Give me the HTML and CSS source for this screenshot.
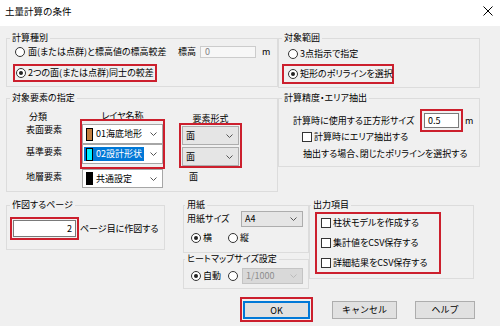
FILE: index.html
```html
<!DOCTYPE html>
<html lang="ja">
<head>
    <meta charset="UTF-8">
    <meta name="viewport" content="width=device-width, initial-scale=1.0">
    <title>土量計算の条件</title>
    <link rel="stylesheet" href="styles.css">
</head>
<body>
<div class="dialog">
    <div class="titlebar">
        <span class="title">土量計算の条件</span>
        <svg class="close" width="10" height="10" viewBox="0 0 10 10"><path d="M0.5 0.5 L9.5 9.5 M9.5 0.5 L0.5 9.5" stroke="#000" stroke-width="1" fill="none"/></svg>
    </div>

    <div class="content">
        <!-- 上段 -->
        <div class="row row-a">
            <fieldset class="group g-kind">
                <legend>計算種別</legend>
                <div class="opt opt-elev">
                    <span class="radio"></span>
                    <span class="elev-text">面(または点群)と標高値の標高較差</span>
                    <span class="elev-label">標高</span>
                    <span class="textbox disabled elev-box">0</span>
                    <span class="unit">m</span>
                </div>
                <div class="mark mark-kind">
                    <span class="radio on"></span><span class="opt-label">2つの面(または点群)同士の較差</span>
                </div>
            </fieldset>

            <fieldset class="group g-range">
                <legend>対象範囲</legend>
                <div class="opt opt-range">
                    <span class="radio"></span><span class="opt-label">3点指示で指定</span>
                </div>
                <div class="mark mark-range">
                    <span class="radio on"></span><span class="opt-label">矩形のポリラインを選択</span>
                </div>
            </fieldset>
        </div>

        <!-- 中段 -->
        <div class="row row-b">
            <fieldset class="group g-target">
                <legend>対象要素の指定</legend>
                <div class="cols">
                    <div class="col-kind">
                        <div class="hd-kind">分類</div>
                        <div class="kind-label k1">表面要素</div>
                        <div class="kind-label k2">基準要素</div>
                        <div class="kind-label k3">地層要素</div>
                    </div>
                    <div class="col-layer">
                        <div class="hd-layer">レイヤ名称</div>
                        <div class="mark mark-layer">
                            <div class="combo">
                                <span class="swatch brown"></span><span class="combo-text">01海底地形</span>
                                <svg class="chev" width="7" height="4" viewBox="0 0 7 4"><polyline points="0.5,0.5 3.5,3.5 6.5,0.5" fill="none" stroke="#555" stroke-width="1"/></svg>
                            </div>
                            <div class="combo">
                                <span class="sel"><span class="swatch cyan"></span><span class="combo-text">02設計形状</span></span>
                                <svg class="chev" width="7" height="4" viewBox="0 0 7 4"><polyline points="0.5,0.5 3.5,3.5 6.5,0.5" fill="none" stroke="#555" stroke-width="1"/></svg>
                            </div>
                        </div>
                        <div class="combo combo-3">
                            <span class="swatch black"></span><span class="combo-text">共通設定</span>
                            <svg class="chev" width="7" height="4" viewBox="0 0 7 4"><polyline points="0.5,0.5 3.5,3.5 6.5,0.5" fill="none" stroke="#555" stroke-width="1"/></svg>
                        </div>
                    </div>
                    <div class="col-type">
                        <div class="hd-type">要素形式</div>
                        <div class="mark mark-type">
                            <div class="combo gray">
                                <span class="combo-text">面</span>
                                <svg class="chev" width="7" height="4" viewBox="0 0 7 4"><polyline points="0.5,0.5 3.5,3.5 6.5,0.5" fill="none" stroke="#555" stroke-width="1"/></svg>
                            </div>
                            <div class="combo gray">
                                <span class="combo-text">面</span>
                                <svg class="chev" width="7" height="4" viewBox="0 0 7 4"><polyline points="0.5,0.5 3.5,3.5 6.5,0.5" fill="none" stroke="#555" stroke-width="1"/></svg>
                            </div>
                        </div>
                        <div class="type-fixed">面</div>
                    </div>
                </div>
            </fieldset>

            <fieldset class="group g-accuracy">
                <legend>計算精度・エリア抽出</legend>
                <div class="acc-size">
                    <span class="acc-label">計算時に使用する正方形サイズ</span>
                    <div class="mark mark-size"><span class="textbox size-box">0.5</span></div>
                    <span class="unit-m">m</span>
                </div>
                <div class="acc-check">
                    <span class="check"></span><span class="opt-label">計算時にエリア抽出する</span>
                </div>
                <div class="acc-note">抽出する場合、閉じたポリラインを選択する</div>
            </fieldset>
        </div>

        <!-- 下段 -->
        <div class="row row-c">
            <fieldset class="group g-page">
                <legend>作図するページ</legend>
                <div class="page-row">
                    <div class="mark mark-page"><span class="textbox num">2</span></div>
                    <span class="page-text">ページ目に作図する</span>
                </div>
            </fieldset>

            <div class="paper-col">
                <fieldset class="group g-paper">
                    <legend>用紙</legend>
                    <div class="paper-size">
                        <span class="paper-label">用紙サイズ</span>
                        <div class="combo gray paper-combo">
                            <span class="combo-text">A4</span>
                            <svg class="chev" width="7" height="4" viewBox="0 0 7 4"><polyline points="0.5,0.5 3.5,3.5 6.5,0.5" fill="none" stroke="#555" stroke-width="1"/></svg>
                        </div>
                    </div>
                    <div class="orient">
                        <span class="radio on"></span><span class="opt-label">横</span>
                        <span class="radio second"></span><span class="opt-label">縦</span>
                    </div>
                </fieldset>

                <fieldset class="group g-heat">
                    <legend>ヒートマップサイズ設定</legend>
                    <div class="heat-row">
                        <span class="radio on"></span><span class="opt-label">自動</span>
                        <span class="radio heat-second"></span>
                        <div class="combo disabled heat-combo">
                            <span class="combo-text">1/1000</span>
                            <svg class="chev" width="7" height="4" viewBox="0 0 7 4"><polyline points="0.5,0.5 3.5,3.5 6.5,0.5" fill="none" stroke="#bbb" stroke-width="1"/></svg>
                        </div>
                    </div>
                </fieldset>
            </div>

            <fieldset class="group g-output">
                <legend>出力項目</legend>
                <div class="mark mark-output">
                    <div class="chk-row"><span class="check"></span><span class="opt-label">柱状モデルを作成する</span></div>
                    <div class="chk-row"><span class="check"></span><span class="opt-label">集計値をCSV保存する</span></div>
                    <div class="chk-row"><span class="check"></span><span class="opt-label">詳細結果をCSV保存する</span></div>
                </div>
            </fieldset>
        </div>

        <!-- ボタン -->
        <div class="buttons">
            <div class="mark mark-ok"><button class="btn btn-ok">OK</button></div>
            <button class="btn btn-cancel">キャンセル</button>
            <button class="btn btn-help">ヘルプ</button>
        </div>
    </div>
</div>
</body>
</html>
```

FILE: styles.css
```css
* {
    box-sizing: border-box;
}

body {
    margin: 0;
    background-color: #f0f0f0;
    font-family: "Noto Sans CJK JP", "Noto Sans", sans-serif;
    font-size: 9px;
    line-height: 12px;
    color: #000;
    font-feature-settings: "palt";
}

.dialog {
    width: 500px;
    height: 326px;
    overflow: hidden;
}

.titlebar {
    height: 26px;
    background-color: #fff;
    display: flex;
    align-items: center;
    justify-content: space-between;
    padding: 0 7px 4px 5px;
}

.title {
    font-size: 9.5px;
    font-feature-settings: normal;
}

.content {
    padding-left: 6px;
}

.row {
    display: flex;
    align-items: flex-start;
}

/* グループボックス */
fieldset.group {
    margin: 0;
    padding: 0;
    border: 1px solid #dcdcdc;
    min-width: 0;
}

legend {
    padding: 0 2px;
    margin-left: 3px;
    line-height: 12px;
}

/* 赤枠の強調 */
.mark {
    border: 2px solid #cc1f2d;
    position: relative;
}

.radio {
    width: 10px;
    height: 10px;
    border: 1px solid #333;
    border-radius: 50%;
    background-color: #fff;
    flex: none;
    position: relative;
}

.radio.on::after {
    content: "";
    position: absolute;
    left: 2px;
    top: 2px;
    width: 4px;
    height: 4px;
    border-radius: 50%;
    background-color: #222;
}

.check {
    width: 10px;
    height: 10px;
    border: 1px solid #333;
    background-color: #fff;
    flex: none;
}

.opt-label {
    margin-left: 2px;
    white-space: nowrap;
}

.textbox {
    display: block;
    background-color: #fff;
    border: 1px solid #7a7a7a;
    white-space: nowrap;
}

.textbox.disabled {
    background-color: #f7f7f7;
    border-color: #cccccc;
    color: #838383;
}

.combo {
    display: flex;
    align-items: center;
    background-color: #fff;
    border: 1px solid #a6a6a6;
    white-space: nowrap;
}

.combo .chev {
    margin-left: auto;
    margin-right: 5px;
    flex: none;
}

.combo.gray {
    background-color: #e5e5e5;
    border-color: #adadad;
}

.combo.disabled {
    background-color: #d9d9d9;
    border-color: #c4c4c4;
    color: #8d8d8d;
}

/* 計算種別 */
.g-kind {
    width: 272px;
    height: 55px;
}

.opt {
    display: flex;
    align-items: center;
    height: 16px;
}

.opt-elev {
    padding-left: 8px;
}

.elev-text {
    width: 150px;
    margin-left: 3px;
    white-space: nowrap;
}

.elev-label {
    width: 22px;
}

.elev-box {
    width: 56px;
    height: 12px;
    line-height: 10px;
    padding-left: 4px;
}

.unit {
    margin-left: 6px;
}

.mark-kind {
    display: flex;
    align-items: center;
    margin: 4px 0 0 6px;
    width: 144px;
    height: 18px;
    padding-left: 1px;
}

/* 対象範囲 */
.g-range {
    width: 202px;
    height: 56px;
    margin: -2px 0 0 9px;
}

.opt-range {
    margin-top: 2px;
    padding-left: 9px;
}

.mark-range {
    display: flex;
    align-items: center;
    margin: 2px 0 0 3px;
    width: 112px;
    height: 20px;
    padding-left: 4px;
}

/* 対象要素の指定 */
.row-a {
    margin-top: 6px;
    height: 55px;
}

.row-b {
    margin-top: 5px;
    height: 100px;
}

.g-target {
    width: 272px;
    height: 100px;
}

.cols {
    display: flex;
    align-items: flex-start;
}

.col-kind {
    width: 62px;
}

.hd-kind {
    text-align: center;
    margin-top: 7px;
}

.kind-label {
    text-align: right;
    padding-right: 7px;
}

.k1 { margin-top: 1px; }
.k2 { margin-top: 10px; }
.k3 { margin-top: 13px; }

.col-layer {
    width: 85px;
    margin-left: 11px;
}

.hd-layer {
    text-align: center;
    margin-top: 6px;
}

.mark-layer {
    margin-top: -3px;
    padding: 3px 0;
}

.mark-layer .combo {
    height: 20px;
}

.swatch {
    width: 7px;
    height: 13px;
    border: 1px solid #000;
    margin-left: 3px;
    flex: none;
}

.swatch.brown { background-color: #c47f3e; }
.swatch.cyan { background-color: #00f0ff; }
.swatch.black { background-color: #000; }

.combo-text {
    margin-left: 3px;
}

.sel {
    display: flex;
    align-items: center;
    height: 14px;
    margin-left: 1px;
    padding-right: 2px;
    background-color: #0078d7;
    color: #fff;
}

.sel .swatch {
    margin-left: 2px;
}

.combo-3 {
    width: 81px;
    height: 19px;
    margin-left: 2px;
}

.col-type {
    width: 63px;
    margin-left: 14px;
}

.hd-type {
    text-align: center;
    margin-top: 9px;
}

.mark-type {
    margin-top: -2px;
    padding: 1px 1px 0;
}

.mark-type .combo {
    height: 19px;
}

.mark-type .combo + .combo {
    margin-top: 2px;
}

.type-fixed {
    margin-top: 3px;
    padding-left: 10px;
}

/* 計算精度・エリア抽出 */
.g-accuracy {
    width: 202px;
    height: 75px;
    margin: 3px 0 0 9px;
}

.acc-size {
    display: flex;
    align-items: center;
    height: 23px;
    margin-top: 5px;
    padding-left: 14px;
}

.acc-label {
    width: 123px;
    white-space: nowrap;
}

.mark-size {
    width: 43px;
    height: 23px;
    padding: 2px;
    margin-left: 4px;
}

.size-box {
    height: 15px;
    line-height: 13px;
    padding-left: 3px;
}

.unit-m {
    margin-left: 2px;
}

.acc-check {
    display: flex;
    align-items: center;
    height: 12px;
    margin-top: -1px;
    padding-left: 23px;
}

.acc-note {
    margin-top: 5px;
    padding-left: 24px;
    white-space: nowrap;
}

/* 下段 */
.row-c {
    margin-top: 7px;
    height: 92px;
}

.g-page {
    width: 159px;
    height: 51px;
}

.page-row {
    display: flex;
    align-items: center;
    margin-top: 6px;
    padding-left: 3px;
}

.mark-page {
    width: 69px;
    height: 23px;
    padding: 1px;
}

.textbox.num {
    height: 17px;
    line-height: 15px;
    text-align: right;
    padding-right: 3px;
}

.page-text {
    margin-left: 1px;
    white-space: nowrap;
}

.paper-col {
    width: 126px;
    margin-left: 18px;
    display: flex;
    flex-direction: column;
}

.g-paper legend,
.g-heat legend,
.g-output legend {
    margin-left: 1px;
}

.g-paper {
    height: 54px;
}

.paper-size {
    display: flex;
    align-items: center;
    height: 16px;
    padding-left: 3px;
}

.paper-label {
    width: 54px;
    white-space: nowrap;
}

.paper-combo,
.heat-combo {
    height: 16px;
}

.paper-combo {
    width: 62px;
}

.orient {
    display: flex;
    align-items: center;
    height: 12px;
    margin-top: 5px;
    padding-left: 7px;
}

.orient .second {
    margin-left: 16px;
}

.g-heat {
    height: 36px;
    margin-top: 1px;
}

.heat-row {
    display: flex;
    align-items: center;
    height: 16px;
    margin-top: 3px;
    padding-left: 7px;
}

.heat-second {
    margin-left: 7px;
}

.heat-combo {
    width: 61px;
    margin-left: 4px;
}

.g-output {
    width: 165px;
    height: 80px;
    margin: 1px 0 0 14px;
}

.mark-output {
    width: 126px;
    margin: 1px 0 0 5px;
    padding-left: 4px;
    display: flex;
    flex-direction: column;
    gap: 2px;
}

.chk-row {
    display: flex;
    align-items: center;
    height: 18px;
}

/* ボタン */
.buttons {
    display: flex;
    align-items: center;
    margin-top: 6px;
    padding-left: 234px;
}

.mark-ok {
    width: 73px;
    height: 25px;
    padding: 2px 1px 1px;
}

.btn {
    height: 18px;
    padding: 0;
    background-color: #e1e1e1;
    border: 1px solid #adadad;
    font-family: inherit;
    font-size: 9px;
    color: #000;
}

.btn-ok {
    width: 67px;
    border-color: #0078d7;
    box-shadow: inset 0 0 0 1px #0078d7;
}

.btn-cancel {
    width: 65px;
    margin-left: 19px;
}

.btn-help {
    width: 60px;
    margin-left: 18px;
}
```
